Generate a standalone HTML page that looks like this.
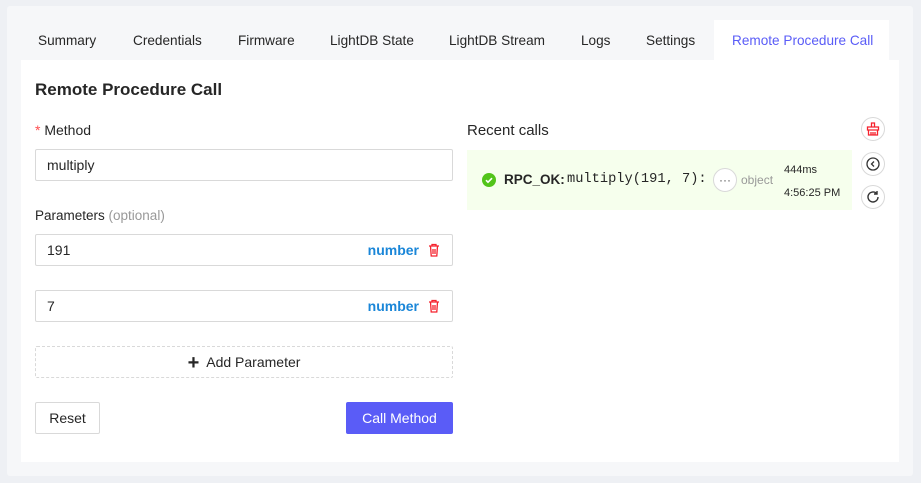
<!DOCTYPE html>
<html><head><meta charset="utf-8"><style>
*{box-sizing:border-box;margin:0;padding:0}
body{width:921px;height:483px;background:#eef0f4;font-family:"Liberation Sans",sans-serif;color:#262626;position:relative;overflow:hidden;font-size:14px}
.a{position:absolute}
.panel{left:7px;top:6px;width:906px;height:470px;background:#f6f7f9;border-radius:3px}
.card{left:21px;top:60px;width:878px;height:402px;background:#fff}
.tab{top:33px;font-size:13.6px;color:#262626}
.inp{border:1px solid #d9d9d9;border-radius:2px;background:#fff;height:32px;left:35px;width:418px;padding:0 11px;line-height:30px;font-size:14px}
.num{position:absolute;right:33px;top:0;color:#1a86d8;font-weight:bold}
.tr{position:absolute;right:12px;top:8px}
.cb{width:24px;height:24px;border:1px solid #d9d9d9;border-radius:50%;background:#fff;display:flex;align-items:center;justify-content:center}
</style></head><body>
<div class="a panel"></div>
<div class="a" style="left:714px;top:20px;width:175px;height:41px;background:#fff"></div>
<div class="a card"></div>
<div class="a tab" style="left:38px">Summary</div>
<div class="a tab" style="left:133px">Credentials</div>
<div class="a tab" style="left:238px">Firmware</div>
<div class="a tab" style="left:330px">LightDB State</div>
<div class="a tab" style="left:449px">LightDB Stream</div>
<div class="a tab" style="left:581px">Logs</div>
<div class="a tab" style="left:646px">Settings</div>
<div class="a tab" style="left:732px;color:#5a5cf7">Remote Procedure Call</div>

<div class="a" style="left:35px;top:80px;font-size:17px;font-weight:bold;color:#262626">Remote Procedure Call</div>
<div class="a" style="left:35px;top:122px"><span style="color:#ff4d4f">*</span> Method</div>
<div class="a inp" style="top:149px">multiply</div>
<div class="a" style="left:35px;top:208px;font-size:13.5px">Parameters <span style="color:#999">(optional)</span></div>
<div class="a inp" style="top:234px">191<span class="num">number</span><svg class="tr" width="12" height="14" viewBox="0 0 12 14" fill="none" stroke="#f5222d" stroke-width="1.3"><path d="M1 3h10M4 3V1.5h4V3M2.5 3l.7 10h5.6l.7-10M5 6v5M7 6v5"/></svg></div>
<div class="a inp" style="top:290px">7<span class="num">number</span><svg class="tr" width="12" height="14" viewBox="0 0 12 14" fill="none" stroke="#f5222d" stroke-width="1.3"><path d="M1 3h10M4 3V1.5h4V3M2.5 3l.7 10h5.6l.7-10M5 6v5M7 6v5"/></svg></div>
<div class="a" style="left:35px;top:346px;width:418px;height:32px;border:1px dashed #d9d9d9;border-radius:2px;text-align:center;line-height:30px"><span style="font-size:20px;vertical-align:-2px;font-weight:bold">+</span>&nbsp; Add Parameter</div>
<div class="a" style="left:35px;top:402px;width:65px;height:32px;border:1px solid #d9d9d9;border-radius:2px;text-align:center;line-height:30px">Reset</div>
<div class="a" style="left:346px;top:402px;width:107px;height:32px;background:#5a5cf7;border-radius:2px;color:#fff;text-align:center;line-height:32px">Call Method</div>

<div class="a" style="left:467px;top:122px;font-size:15px">Recent calls</div>
<div class="a" style="left:467px;top:150px;width:385px;height:60px;background:#f6ffed"></div>
<svg class="a" style="left:482px;top:173px" width="14" height="14" viewBox="0 0 14 14"><circle cx="7" cy="7" r="7" fill="#52c41a"/><path d="M4 7.2l2 2 4-4" stroke="#fff" stroke-width="1.6" fill="none"/></svg>
<div class="a" style="left:504px;top:172px;font-weight:bold;font-size:13.5px">RPC_OK:</div>
<div class="a" style="left:567px;top:172px;font-family:'Liberation Mono',monospace;font-size:13.7px">multiply(191, 7):</div>
<div class="a cb" style="left:713px;top:168px;color:#555;font-size:12px;letter-spacing:0">···</div>
<div class="a" style="left:741px;top:173px;font-size:12px;color:#999">object</div>
<div class="a" style="left:784px;top:164px;font-size:11px">444ms</div>
<div class="a" style="left:784px;top:187px;font-size:11px">4:56:25 PM</div>

<div class="a cb" style="left:861px;top:117px"><svg width="14" height="14" viewBox="0 0 14 14" fill="none" stroke="#f5222d" stroke-width="1.3"><path d="M5.5 1h3v4h-3zM1.5 5h11v3h-11zM2.5 8v5h9V8M5 10v3M7 10v3M9 10v3"/></svg></div>
<div class="a cb" style="left:861px;top:152px"><svg width="14" height="14" viewBox="0 0 14 14" fill="none" stroke="#333" stroke-width="1.3"><circle cx="7" cy="7" r="6"/><path d="M8 4.5L5.5 7 8 9.5"/></svg></div>
<div class="a cb" style="left:861px;top:185px"><svg width="14" height="14" viewBox="0 0 14 14" fill="none" stroke="#333" stroke-width="1.4"><path d="M12 7a5 5 0 1 1-1.5-3.6"/><path d="M11 1v3H8"/></svg></div>
</body></html>
